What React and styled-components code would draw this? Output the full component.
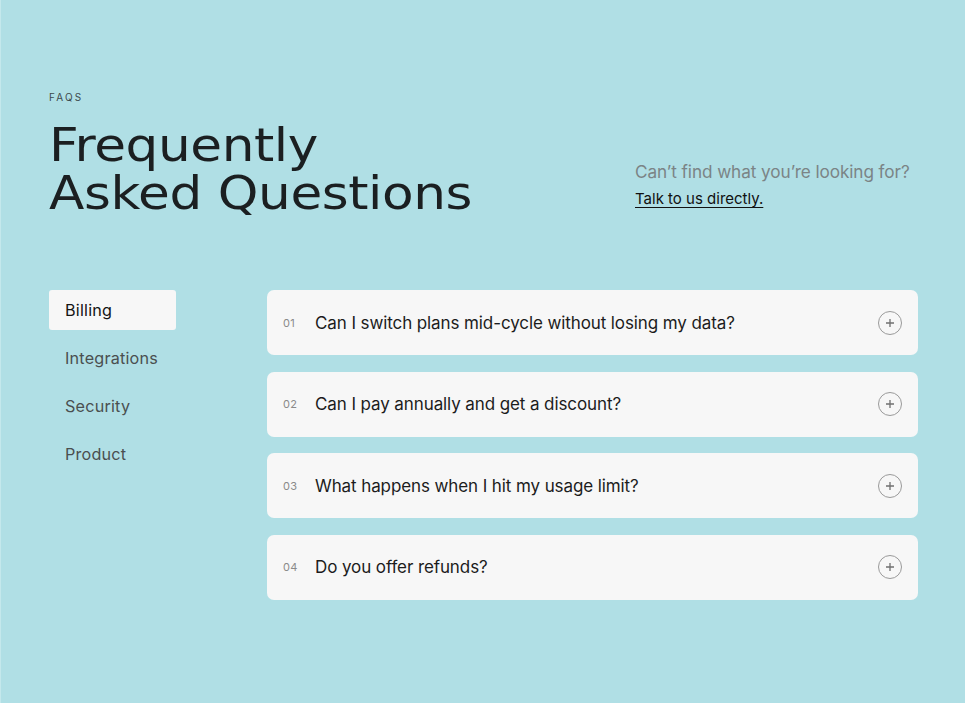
import React, { useState } from 'react';
import styled, { createGlobalStyle } from 'styled-components';

const GlobalStyle = createGlobalStyle`
  html, body {
    margin: 0;
    padding: 0;
    background: #b0dfe5;
  }
  * { box-sizing: border-box; }
`;

const Page = styled.div`
  min-height: 703px;
  background: #b0dfe5;
  border-left: 1px solid #c4e8ec;
  padding: 91px 47px 60px 48px;
  font-family: Inter, "Noto Sans", sans-serif;
  color: #1c1c1c;
`;

const Header = styled.header`
  display: flex;
  justify-content: space-between;
  align-items: flex-end;
`;

const Eyebrow = styled.div`
  font-size: 10px;
  letter-spacing: 2.2px;
  color: #3d4a4c;
  margin-bottom: 18px;
`;

const Title = styled.h1`
  margin: 0;
  font-family: "DejaVu Sans", sans-serif;
  font-weight: 400;
  font-size: 47px;
  line-height: 48px;
  letter-spacing: -0.4px;
  color: #1b1f21;
  transform: scaleX(1.1);
  transform-origin: left center;
`;

const Aside = styled.div`
  width: 283px;
  padding-bottom: 9px;
`;

const AsideText = styled.p`
  margin: 0 0 6px;
  font-size: 17.2px;
  color: #7b8486;
  letter-spacing: -0.1px;
`;

const AsideLink = styled.a`
  font-size: 15px;
  color: #111;
  text-decoration: underline;
  text-underline-offset: 3px;
  cursor: pointer;
`;

const Body = styled.div`
  display: grid;
  grid-template-columns: 127px 1fr;
  column-gap: 91px;
  margin-top: 73px;
`;

const Tabs = styled.nav`
  display: flex;
  flex-direction: column;
  gap: 8px;
`;

const Tab = styled.button`
  height: 40px;
  border: none;
  border-radius: 3px;
  padding: 0 16px;
  text-align: left;
  font-family: inherit;
  font-size: 16.2px;
  letter-spacing: 0.2px;
  background: ${p => (p.$active ? '#f7f7f7' : 'transparent')};
  color: ${p => (p.$active ? '#141414' : '#4a4f50')};
  cursor: pointer;
`;

const List = styled.div`
  display: flex;
  flex-direction: column;
  gap: 16.5px;
`;

const Card = styled.div`
  height: 65px;
  background: #f7f7f7;
  border-radius: 7px;
  display: flex;
  align-items: center;
  padding: 0 16px;
`;

const Num = styled.span`
  width: 32px;
  font-size: 11px;
  color: #8a8a8a;
  letter-spacing: 0.3px;
`;

const Question = styled.span`
  flex: 1;
  font-size: 17px;
  color: #1c1c1c;
  letter-spacing: -0.1px;
`;

const PlusBtn = styled.span`
  width: 24px;
  height: 24px;
  border: 1px solid #9a9a9a;
  border-radius: 50%;
  display: flex;
  align-items: center;
  justify-content: center;
`;

const tabs = ['Billing', 'Integrations', 'Security', 'Product'];

const questions = [
  'Can I switch plans mid-cycle without losing my data?',
  'Can I pay annually and get a discount?',
  'What happens when I hit my usage limit?',
  'Do you offer refunds?',
];

export default function App() {
  const [active, setActive] = useState(0);
  return (
    <>
      <GlobalStyle />
      <Page>
        <Header>
          <div>
            <Eyebrow>FAQS</Eyebrow>
            <Title>
              Frequently
              <br />
              Asked Questions
            </Title>
          </div>
          <Aside>
            <AsideText>Can’t find what you’re looking for?</AsideText>
            <AsideLink>Talk to us directly.</AsideLink>
          </Aside>
        </Header>
        <Body>
          <Tabs>
            {tabs.map((t, i) => (
              <Tab key={t} $active={i === active} onClick={() => setActive(i)}>
                {t}
              </Tab>
            ))}
          </Tabs>
          <List>
            {questions.map((q, i) => (
              <Card key={q}>
                <Num>0{i + 1}</Num>
                <Question>{q}</Question>
                <PlusBtn>
                  <svg width="10" height="10" viewBox="0 0 10 10">
                    <path d="M5 1v8M1 5h8" stroke="#707070" strokeWidth="1.3" />
                  </svg>
                </PlusBtn>
              </Card>
            ))}
          </List>
        </Body>
      </Page>
    </>
  );
}
